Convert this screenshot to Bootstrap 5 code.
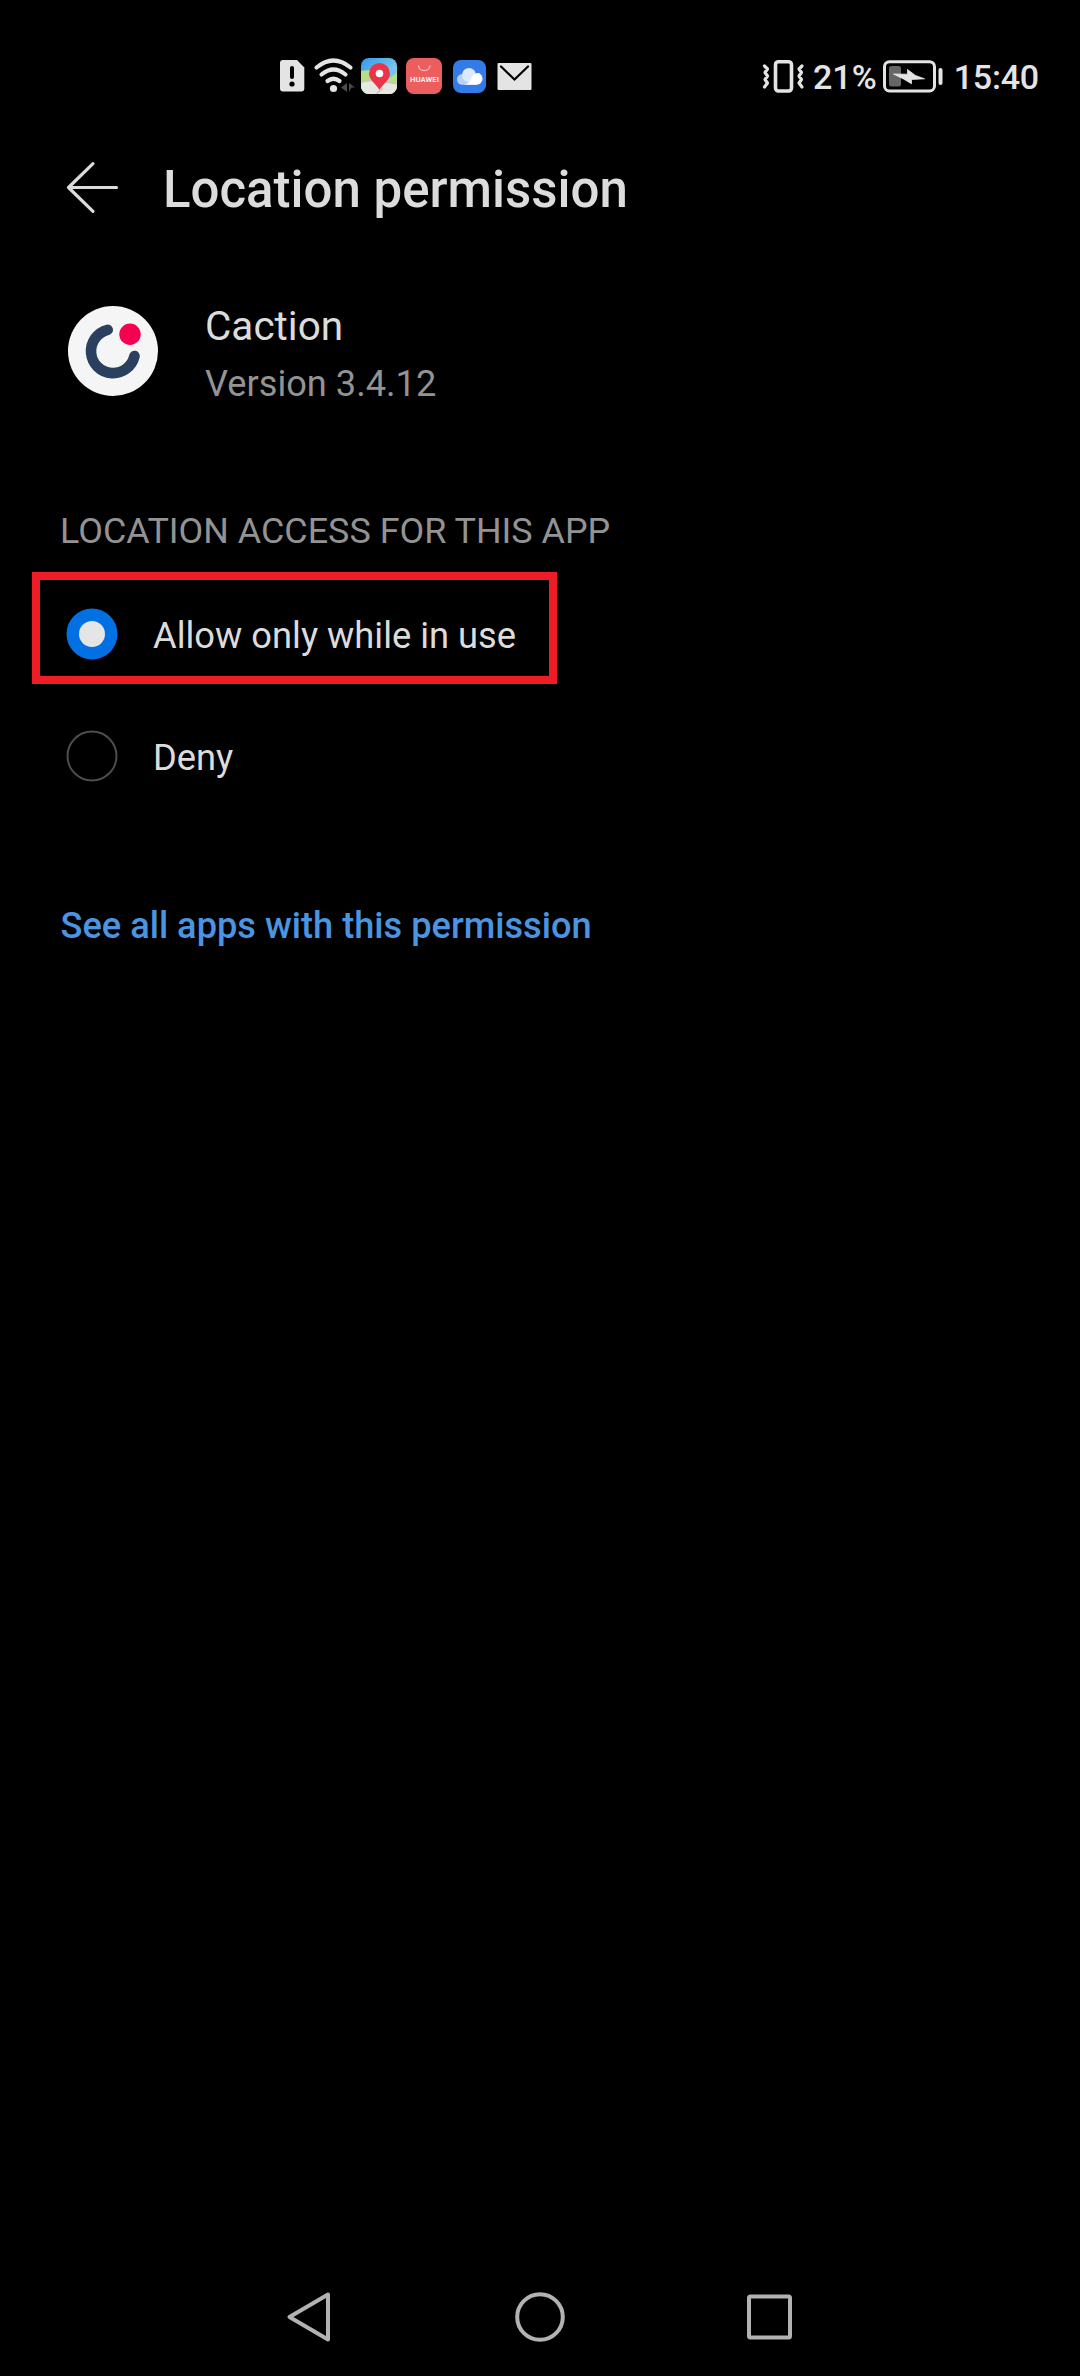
<!DOCTYPE html>
<html lang="en">
<head>
<meta charset="utf-8">
<meta name="viewport" content="width=device-width, initial-scale=1">
<title>Location permission</title>
<link href="https://cdn.jsdelivr.net/npm/bootstrap@5.3.0/dist/css/bootstrap.min.css" rel="stylesheet">
<style>
  body { background: #000; color: #dcdcdc; font-family: Roboto, sans-serif; font-size: 36px; line-height: 48px; overflow: hidden; }
  svg { display: block; flex: none; }
  .screen { width: 1080px; height: 2376px; }
  .statusbar { height: 60px; margin-top: 45px; padding: 0 41px 0 275px; color: #e4e4e4; font-size: 34px; font-weight: 500; line-height: 64px; }
  .statusbar .clock { letter-spacing: -.2px; }
  .titlebar { height: 80px; margin-top: 45px; padding-left: 60px; }
  .titlebar h1 { margin-left: 37px; font-size: 51px; font-weight: 500; line-height: 80px; }
  .appinfo { height: 92px; margin-top: 75px; padding-left: 67px; }
  .appinfo .labels { margin-left: 46px; }
  .appname { font-size: 40.5px; line-height: 56px; margin-top: -7px; }
  .appversion { font-size: 36.2px; margin-top: 6px; }
  .dim { color: #939393; }
  .section-title { margin: 110px 0 0 60px; font-size: 35.9px; }
  .choice { height: 112px; width: 525px; margin-left: 32px; border: 8px solid transparent; padding: 12px 0 0 26px; }
  .choice.marked { border-color: #ee1c25; margin-top: 17px; }
  .choice + .choice { margin-top: 10px; }
  .choice span { margin-left: 35px; padding-top: 3px; font-size: 36.3px; }
  .seeall { margin: 96px 0 0 60.5px; color: #4a94e0; font-size: 36.2px; font-weight: 500; }
  .navkeys { height: 90px; margin-bottom: 16px; padding-left: 260px; }
</style>
</head>
<body>
<div class="screen d-flex flex-column">
  <header class="statusbar d-flex flex-shrink-0">
    <svg width="35" height="60" viewBox="275 45 35 60"><path d="M283 60H297L304.300 67.500V88.500Q304.300 91.500 301.300 91.500H283Q280 91.500 280 88.500V63Q280 60 283 60Z" fill="#e4e4e4"/><path d="M292 68V77" stroke="#000" stroke-width="4" stroke-linecap="round"/><circle cx="292" cy="84" r="2.600"/></svg>
    <svg width="48" height="60" viewBox="310 45 48 60"><g fill="none" stroke="#e4e4e4" stroke-width="4.200" stroke-linecap="round"><path d="M316.500 67.500Q333.500 53.500 350.500 67.500"/><path d="M321.500 74.500Q333.500 64.500 345.500 74.500"/><path d="M327.500 81Q333.500 76.500 339.500 81"/></g><circle cx="333.500" cy="88.500" r="3.600" fill="#e4e4e4"/><path d="M347 83V92L341 87.500ZM349 83L355 87.500H351.500L349 92Z" fill="#4b4b4b"/></svg>
    <svg width="43" height="60" viewBox="358 45 43 60"><defs><linearGradient id="sky" x2="1" y2="1"><stop stop-color="#359bea"/><stop offset=".6" stop-color="#76c5ec"/></linearGradient><clipPath id="tile"><rect x="361" y="58" width="36" height="36" rx="8"/></clipPath></defs><g clip-path="url(#tile)"><path d="M361 58H397V94H361Z" fill="url(#sky)"/><path d="M361 71Q374 68 380 76T397 72V94H361Z" fill="#b7df83"/><path d="M361 83L371 80L397 84V94H361Z" fill="#e8e8e3"/><path d="M361 82L375 80M386 82L397 84M376 94L383 88" stroke="#c4cabe" stroke-width="1.500"/></g><path d="M379.500 90C376 84 369 80 369 73.500A10.500 10.500 0 0 1 390 73.500C390 80 383 84 379.500 90Z" fill="#e93449"/><circle cx="379.500" cy="73.500" r="3.800" fill="#fff"/></svg>
    <svg width="46" height="60" viewBox="401 45 46 60"><rect x="406" y="58" width="36" height="36" rx="8" fill="#ec5d5e"/><path d="M418.500 66A5.800 5.300 0 0 0 430 66" fill="none" stroke="#f8b9b8" stroke-width="1.400" stroke-linecap="round"/><text x="424.500" y="81.500" text-anchor="middle" textLength="29" lengthAdjust="spacingAndGlyphs" font-size="7" font-weight="700" fill="#fde8e8">HUAWEI</text></svg>
    <svg width="44" height="60" viewBox="447 45 44 60"><defs><linearGradient id="puff" x2="0" y2="1"><stop stop-color="#cfe3ff"/><stop offset="1" stop-color="#fff"/></linearGradient></defs><rect x="453" y="60" width="33" height="33" rx="8" fill="#347bea"/><rect x="457" y="74" width="24" height="10.700" rx="5.300" fill="#b4d2fc"/><circle cx="469" cy="75" r="7" fill="#dbeaff"/><path d="M464 84.700Q470 84 472 76.500Q475 72.500 479 73Q482.500 75 482.500 79Q482 84.700 476 84.700Z" fill="#fff"/></svg>
    <svg width="46" height="60" viewBox="491 45 46 60"><rect x="497.500" y="63" width="34" height="27" rx="1" fill="#e4e4e4"/><path d="M501 66.500L514.500 79.500L528 66.500" fill="none" stroke="#000" stroke-width="2.200" stroke-linecap="round"/></svg>
    <div class="d-flex ms-auto">
      <svg width="54" height="60" viewBox="759 45 54 60"><g fill="none" stroke="#e4e4e4" stroke-linejoin="round" stroke-linecap="round"><rect x="775.500" y="61.700" width="16" height="29.300" rx="3" stroke-width="3.600"/><path d="M764.500 66L767.500 69L765 72.500L767.500 76L765 79.500L767.500 83L764.500 87M802 66L799 69L801.500 72.500L799 76L801.500 79.500L799 83L802 87" stroke-width="3.200"/></g></svg>
      <span>21%</span>
      <svg width="77" height="60" viewBox="877 45 77 60"><rect x="884.500" y="61.700" width="50" height="29.300" rx="5" fill="none" stroke="#e4e4e4" stroke-width="3"/><rect x="889" y="66" width="12" height="20.500" rx="2.500" fill="#666"/><path d="M893.500 74L907.500 74.200V69.500L915.500 75.500L924.500 78.800L911.500 79.500V83.800L903.500 79Z" fill="#e4e4e4" stroke="#e4e4e4" stroke-width=".8"/><rect x="938.500" y="68" width="4" height="17" rx="2" fill="#e4e4e4"/></svg>
      <span class="clock">15:40</span>
    </div>
  </header>

  <div class="titlebar d-flex flex-shrink-0">
    <svg width="66" height="80" viewBox="60 150 66 80"><path d="M116.500 187.500H68.500M93 163.700L68.500 187.500L93 211.300" fill="none" stroke="#dcdcdc" stroke-width="3.200" stroke-linecap="round" stroke-linejoin="round"/></svg>
    <h1 class="mb-0">Location permission</h1>
  </div>

  <main>
    <section class="appinfo d-flex">
      <svg width="92" height="92" viewBox="67 305 92 92"><circle cx="113" cy="351" r="45" fill="#f5f5f5"/><path d="M107.700 329.800A22 22 0 1 0 134.500 356" fill="none" stroke="#2a405e" stroke-width="10.600" stroke-linecap="round"/><circle cx="130" cy="334.300" r="10.700" fill="#f80052"/></svg>
      <div class="labels">
        <div class="appname">Caction</div>
        <div class="appversion dim">Version 3.4.12</div>
      </div>
    </section>

    <div class="section-title dim">LOCATION ACCESS FOR THIS APP</div>
    <div class="choice marked d-flex align-items-center">
      <svg width="52" height="52" viewBox="0 0 52 52"><circle cx="26" cy="26" r="25.500" fill="#0070e3"/><circle cx="26" cy="26" r="13" fill="#e5e5e5"/></svg>
      <span>Allow only while in use</span>
    </div>
    <div class="choice d-flex align-items-center">
      <svg width="52" height="52" viewBox="0 0 52 52"><circle cx="26" cy="26" r="24.500" fill="none" stroke="#4d4d4d" stroke-width="2"/></svg>
      <span>Deny</span>
    </div>
    <div class="seeall">See all apps with this permission</div>
  </main>

  <nav class="navkeys d-flex mt-auto flex-shrink-0">
    <svg width="560" height="90" viewBox="260 2270 560 90"><g fill="none" stroke="#b2b2b2" stroke-width="4" stroke-linejoin="round"><path d="M328 2294.500V2339.500L289.500 2317Z"/><circle cx="540" cy="2317" r="22.800"/><rect x="749" y="2296.500" width="41" height="41" rx="1.500"/></g></svg>
  </nav>
</div>
<script src="https://cdn.jsdelivr.net/npm/bootstrap@5.3.0/dist/js/bootstrap.bundle.min.js"></script>
</body>
</html>
